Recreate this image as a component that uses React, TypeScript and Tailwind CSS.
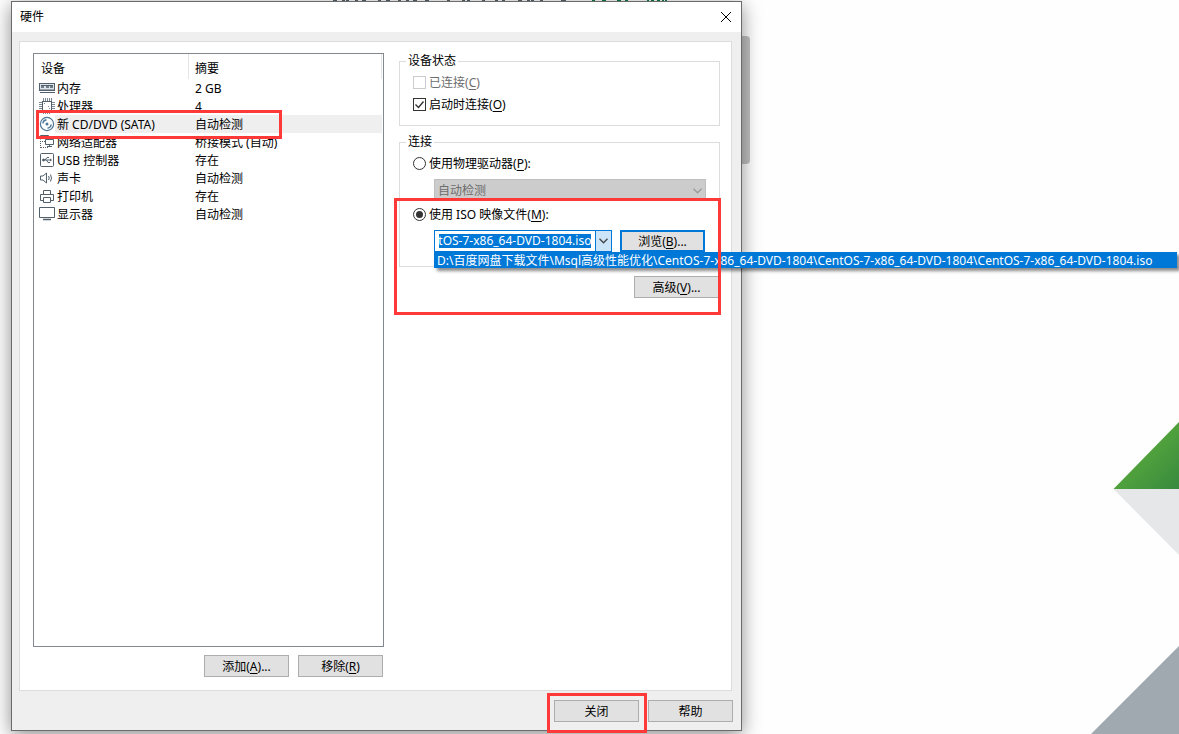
import { useEffect, useRef } from "react";
import type { ReactNode } from "react";

const FOLDER = "D:\\百度网盘下载文件\\Msql高级性能优化\\CentOS-7-x86_64-DVD-1804\\CentOS-7-x86_64-DVD-1804";
const ISO_PATH = FOLDER + "\\CentOS-7-x86_64-DVD-1804.iso";

const MemoryIcon = () => (
  <svg width="16" height="16" viewBox="0 0 16 16" fill="none" stroke="#51606b" shapeRendering="crispEdges">
    <path d="M.5 3.5h15v7H.5z" fill="#dfe4e8" />
    <path d="M2 5h3v3H2zM6.500 5h3v3h-3zM11 5h3v3h-3z" fill="#6f7d87" stroke="none" />
    <path d="M2 5.500h12" />
    <path d="M1 9.500h14" stroke="#9aa5ad" />
    <path d="M.5 12.500h15" />
  </svg>
);
const CpuIcon = () => (
  <svg width="16" height="16" viewBox="0 0 16 16" fill="none" stroke="#51606b" shapeRendering="crispEdges">
    <path d="M3.5 3.5h9v9h-9z" />
    <path
      stroke="#7d8992"
      d="M4.5 0v3M6.5 0v3M8.5 0v3M10.5 0v3M12.5 0v3M4.5 13v3M6.5 13v3M8.5 13v3M10.5 13v3M0 4.5h3M0 6.5h3M0 8.5h3M0 10.5h3M13 4.5h3M13 6.5h3M13 8.5h3M13 10.5h3M5 5.5h1M10 10.5h1M9 8.5h1"
    />
  </svg>
);
const DiscIcon = () => (
  <svg width="16" height="16" viewBox="0 0 16 16" fill="none" stroke="#4d7796">
    <circle cx="8" cy="8" r="6.600" fill="#fff" strokeWidth="1.200" />
    <circle cx="8" cy="8" r="1.500" fill="#4d7796" stroke="none" />
    <path d="M3.800 7.500A4.500 4.500 0 0 1 7.500 3.800M12.200 8.500A4.500 4.500 0 0 1 8.500 12.200" strokeWidth="1.400" />
  </svg>
);
const NetworkIcon = () => (
  <svg width="16" height="16" viewBox="0 0 16 16" fill="none" stroke="#51606b">
    <path d="M1.500 5.500v-4h8v4" />
    <path d="M6.500 5.500h8v5h-8z" fill="#fff" />
    <path d="M8 12.500h5M10.500 10.500v2" />
    <path d="M1.500 7v7M2 13.500h8M3 7.500h3" strokeDasharray="1 1" />
  </svg>
);
const UsbIcon = () => (
  <svg width="16" height="16" viewBox="0 0 16 16" fill="none" stroke="#51606b">
    <rect x="1.500" y="1.500" width="13" height="13" rx="1" />
    <path d="M4 8h8M6 8l2-2.500h2M7.500 8 9 10.500h2" />
    <circle cx="4.500" cy="8" r="1" fill="#51606b" />
    <path d="m11 6.500 2 1.500-2 1.500z" fill="#51606b" stroke="none" />
  </svg>
);
const SoundIcon = () => (
  <svg width="16" height="16" viewBox="0 0 16 16" fill="none" stroke="#51606b">
    <path d="M1.500 6v4h2.500l3.500 3V3L4 6z" />
    <path d="M9.500 6q1.500 2 0 4M11.500 4.500q2 3.500 0 7" />
  </svg>
);
const PrinterIcon = () => (
  <svg width="16" height="16" viewBox="0 0 16 16" fill="none" stroke="#51606b">
    <path d="M4.500 6.500v-4h7v4M4 12.500H1.500v-6h13v6H12M4.500 9.500h7v5h-7z" />
  </svg>
);
const DisplayIcon = () => (
  <svg width="16" height="16" viewBox="0 0 16 16" fill="none" stroke="#51606b">
    <path d="M.5 1.500h15v10H.5z" />
    <path d="M4 13.500h8" strokeWidth="1.500" />
  </svg>
);

const devices: { name: string; summary: string; icon: ReactNode; selected?: boolean }[] = [
  { name: "内存", summary: "2 GB", icon: <MemoryIcon /> },
  { name: "处理器", summary: "4", icon: <CpuIcon /> },
  { name: "新 CD/DVD (SATA)", summary: "自动检测", icon: <DiscIcon />, selected: true },
  { name: "网络适配器", summary: "桥接模式 (自动)", icon: <NetworkIcon /> },
  { name: "USB 控制器", summary: "存在", icon: <UsbIcon /> },
  { name: "声卡", summary: "自动检测", icon: <SoundIcon /> },
  { name: "打印机", summary: "存在", icon: <PrinterIcon /> },
  { name: "显示器", summary: "自动检测", icon: <DisplayIcon /> },
];

function Button({ children, focused = false }: { children: ReactNode; focused?: boolean }) {
  return (
    <button
      type="button"
      className={
        focused
          ? "h-[22px] w-[85px] border-2 border-[#0078d7] bg-[#e1e1e1] pt-[2px] text-center leading-4"
          : "h-[22px] w-[85px] border border-[#adadad] bg-[#e1e1e1] pt-[2px] text-center leading-4"
      }
    >
      {children}
    </button>
  );
}

const Key = ({ k }: { k: string }) => (
  <>
    (<span className="underline underline-offset-2">{k}</span>)
  </>
);

const Highlight = ({ className }: { className: string }) => (
  <div aria-hidden="true" className={"pointer-events-none absolute z-20 border-3 border-[#ff3838] " + className} />
);

function Chevron({ color }: { color: string }) {
  return (
    <svg width="9" height="6" viewBox="0 0 9 6" fill="none" stroke={color} strokeWidth="1.3">
      <path d="m.5.8 4 4 4-4" />
    </svg>
  );
}

function IsoCombo() {
  const input = useRef<HTMLInputElement>(null);
  useEffect(() => {
    if (input.current) input.current.scrollLeft = input.current.scrollWidth;
  }, []);
  return (
    <div className="relative flex h-[22px] w-[178px] border border-[#0078d7] bg-white">
      <div className="flex flex-1 items-center px-1">
        <input
          ref={input}
          aria-label="ISO 映像文件"
          readOnly
          value={ISO_PATH}
          className="h-[14px] w-full min-w-0 bg-[#0078d7] leading-[14px] text-white outline-none"
        />
      </div>
      <button
        type="button"
        aria-label="展开"
        className="flex w-[16px] items-center justify-center border-l border-[#0078d7] bg-[#cce4f7]"
      >
        <Chevron color="#444" />
      </button>
      <ul
        role="listbox"
        aria-label="ISO 映像文件"
        className="absolute top-[21px] -left-px z-10 w-[743px] bg-[#0078d7] shadow-[3px_3px_3px_rgba(0,0,0,0.45)]"
      >
        <li role="option" aria-selected="true" className="h-4 px-[3px] leading-[18px] whitespace-nowrap text-white">
          {ISO_PATH}
        </li>
      </ul>
    </div>
  );
}

function DeviceTable() {
  return (
    <div className="flex-1 border border-[#828790] pr-px">
      <table className="w-full table-fixed border-separate border-spacing-0 text-left">
        <colgroup>
          <col className="w-[155px]" />
          <col />
        </colgroup>
        <thead>
          <tr className="h-[25px]">
            <th className="border-r border-[#e5e5e5] p-0 pt-1 pl-[7px] font-normal">设备</th>
            <th className="border-r border-[#e5e5e5] p-0 pt-1 pl-[6px] font-normal">摘要</th>
          </tr>
        </thead>
        <tbody>
          {devices.map((d) => (
            <tr key={d.name} className="h-[18px]">
              <td className="p-0 pl-[5px]">
                <div className="flex h-[18px] items-center">
                  {d.icon}
                  <span
                    className={
                      d.selected ? "flex-1 bg-[#efefef] pt-[2px] pl-[2px] leading-4" : "flex-1 pt-[2px] pl-[2px] leading-4"
                    }
                  >
                    {d.name}
                  </span>
                </div>
              </td>
              <td
                className={
                  d.selected ? "bg-[#efefef] p-0 pt-[2px] pl-[6px] leading-4" : "p-0 pt-[2px] pl-[6px] leading-4"
                }
              >
                {d.summary}
              </td>
            </tr>
          ))}
        </tbody>
      </table>
    </div>
  );
}

function Backdrop() {
  return (
    <div aria-hidden="true" className="absolute inset-0 overflow-hidden">
      <svg className="absolute top-0 left-[333px]" width="340" height="2" viewBox="0 0 340 2" fill="none" strokeWidth="4">
        <path
          stroke="#53636c"
          d="M0 0h4M9 0h3M13 0h3M22 0h3M29 0h4M45 0h3M53 0h4M65 0h3M73 0h3M80 0h4M92 0h4M114 0h3M129 0h3M134 0h3M149 0h3M162 0h3M169 0h3M185 0h4M194 0h3M198 0h3M207 0h3M228 0h5"
        />
        <path stroke="#0e7a45" d="M259 0h3M269 0h4M284 0h4M292 0h3M314 0h2M318 0h3M324 0h3M329 0h2M332 0h2" />
      </svg>
      <div className="absolute top-[36px] left-[730px] h-[128px] w-[20px] rounded bg-[#c1c1c1]" />
      <svg className="absolute right-0 bottom-0" width="90" height="314" viewBox="0 0 90 314">
        <defs>
          <linearGradient id="leaf" x1="0" y1="0" x2="1" y2="1">
            <stop offset="0.4" stopColor="#55a63c" />
            <stop offset="1" stopColor="#38893e" />
          </linearGradient>
        </defs>
        <path d="M24.500 69 90 2v67z" fill="url(#leaf)" />
        <path d="M24.500 69H90v66z" fill="#e6e7e8" />
        <path d="M2 314 90 226v88z" fill="#9fa9af" />
      </svg>
    </div>
  );
}

export default function App() {
  return (
    <main className="relative flex min-h-screen items-start overflow-hidden bg-[#fefefe] pt-px pl-[11px] font-['Noto_Sans','Noto_Sans_CJK_SC',sans-serif] text-[12px] leading-4 text-black">
      <Backdrop />
      <section
        aria-label="硬件"
        className="relative flex min-h-[calc(100vh-4px)] w-full max-w-[731px] flex-col border border-[#6b6b6b] bg-[#efefef] shadow-[0_4px_18px_rgba(0,0,0,0.45)]"
      >
        <header className="flex h-[30px] items-center justify-between bg-white pr-[9px] pb-px pl-2">
          <h1>硬件</h1>
          <button type="button" aria-label="关闭窗口">
            <svg width="12" height="12" viewBox="0 0 12 12" stroke="#000" fill="none">
              <path d="m1 1 10 10M11 1 1 11" />
            </svg>
          </button>
        </header>
        <div className="mt-[9px] mr-[9px] ml-[7px] flex flex-1 gap-[15px] border border-[#dcdcdc] bg-white pt-[11px] pr-[11px] pb-[13px] pl-[13px]">
          <div className="flex w-[351px] flex-col gap-2">
            <DeviceTable />
            <div className="flex justify-end gap-[9px] pr-px">
              <Button>
                添加
                <Key k="A" />
                ...
              </Button>
              <Button>
                移除
                <Key k="R" />
              </Button>
            </div>
          </div>
          <div className="flex min-w-0 flex-1 flex-col">
            <fieldset className="border border-[#dcdcdc] px-[13px] pt-[2px] pb-[10px]">
              <legend className="-ml-[7px] px-[2px] leading-4">设备状态</legend>
              <label className="flex h-[22px] items-center gap-[3px] text-[#6d6d6d]">
                <input type="checkbox" disabled className="size-[13px] appearance-none border border-[#ccc] bg-white" />
                <span className="pt-px">
                  已连接
                  <Key k="C" />
                </span>
              </label>
              <label className="flex h-[22px] items-center gap-[3px]">
                <span className="relative flex">
                  <input type="checkbox" defaultChecked className="size-[13px] appearance-none border border-[#333] bg-white" />
                  <svg
                    className="pointer-events-none absolute inset-0"
                    width="13"
                    height="13"
                    viewBox="0 0 13 13"
                    fill="none"
                    stroke="#333"
                    strokeWidth="1.4"
                  >
                    <path d="m2.500 6.500 3 3 5-6" />
                  </svg>
                </span>
                <span className="pt-px">
                  启动时连接
                  <Key k="O" />
                </span>
              </label>
            </fieldset>
            <fieldset className="mt-2 border border-[#dcdcdc] px-[13px] pt-[2px] pb-[14px]">
              <legend className="-ml-[7px] px-[2px] leading-4">连接</legend>
              <label className="flex h-[22px] items-center gap-[3px]">
                <input
                  type="radio"
                  name="source"
                  className="size-[13px] appearance-none rounded-full border border-[#333] bg-white"
                />
                <span className="pt-px">
                  使用物理驱动器
                  <Key k="P" />:
                </span>
              </label>
              <div className="relative mt-[5px] ml-[21px] flex">
                <select
                  disabled
                  aria-label="物理驱动器"
                  className="h-[22px] w-full appearance-none border border-[#bfbfbf] bg-[#ccc] pt-[2px] pl-[3px] text-[#6d6d6d] opacity-100"
                >
                  <option>自动检测</option>
                </select>
                <span className="pointer-events-none absolute top-[9px] right-1 flex">
                  <Chevron color="#999" />
                </span>
              </div>
              <label className="mt-[2px] flex h-[22px] items-center gap-[3px]">
                <span className="relative flex">
                  <input
                    type="radio"
                    name="source"
                    defaultChecked
                    className="size-[13px] appearance-none rounded-full border border-[#333] bg-white"
                  />
                  <span className="pointer-events-none absolute inset-[3px] rounded-full bg-[#333]" />
                </span>
                <span className="pt-[2px]">
                  使用 ISO 映像文件
                  <Key k="M" />:
                </span>
              </label>
              <div className="mt-[5px] ml-[21px] flex gap-2">
                <IsoCombo />
                <Button focused>
                  浏览
                  <Key k="B" />
                  ...
                </Button>
              </div>
            </fieldset>
            <div className="mt-[9px] flex justify-end pr-px">
              <Button>
                高级
                <Key k="V" />
                ...
              </Button>
            </div>
          </div>
        </div>
        <footer className="flex justify-end gap-[9px] pt-[9px] pr-2 pb-2">
          <Button>关闭</Button>
          <Button>帮助</Button>
        </footer>
        <Highlight className="top-[108px] left-[24px] h-[29px] w-[246px]" />
        <Highlight className="top-[196px] left-[382px] h-[117px] w-[327px]" />
        <Highlight className="top-[691px] left-[535px] h-[40px] w-[100px]" />
      </section>
    </main>
  );
}
